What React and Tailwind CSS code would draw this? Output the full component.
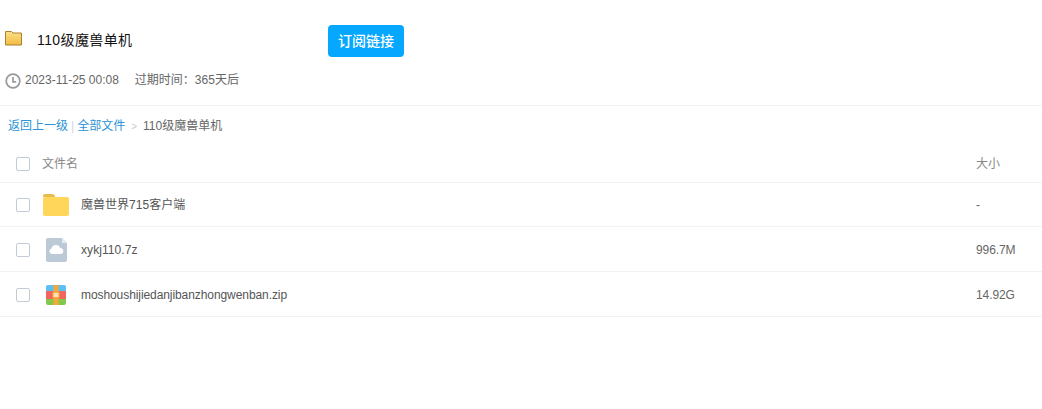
const FONT = "font-['Liberation_Sans','Noto_Sans_CJK_SC',sans-serif]";

const FILES = [
  { name: "魔兽世界715客户端", size: "-", icon: "folder", row: "h-[44px]", nameClass: "tracking-[0.02px]" },
  { name: "xykj110.7z", size: "996.7M", icon: "file", row: "h-[45px] pt-px", nameClass: "tracking-[0.08px]" },
  { name: "moshoushijiedanjibanzhongwenban.zip", size: "14.92G", icon: "zip", row: "h-[45px] pt-px", nameClass: "tracking-[-0.08px]" },
];

function SmallFolder() {
  return (
    <svg width="17" height="16" viewBox="0 0 17 16">
      <defs>
        <linearGradient id="sf" x1="0" y1="0" x2="0" y2="1">
          <stop offset="0" stopColor="#fbe08a" />
          <stop offset="1" stopColor="#f3bc42" />
        </linearGradient>
      </defs>
      <path d="M.5 1.5h6l1.500 1.500h8.500v12H.5z" fill="url(#sf)" stroke="#a9822f" />
    </svg>
  );
}

function Clock() {
  return (
    <svg className="mt-px" width="16" height="16" viewBox="0 0 16 16" fill="none" stroke="#999" strokeWidth="1.700">
      <circle cx="8" cy="8" r="6.800" />
      <path d="M8 4v4.800h3.200" />
    </svg>
  );
}

function FolderIcon() {
  return (
    <svg width="26" height="22" viewBox="0 0 26 22">
      <path d="M0 2a2 2 0 0 1 2-2h7a3 3 0 0 1 3 3H0z" fill="#e8bb4f" />
      <rect x="0" y="3" width="26" height="19" rx="2" fill="#ffd659" />
    </svg>
  );
}

function FileIcon() {
  return (
    <svg width="21" height="24" viewBox="0 0 21 24">
      <path d="M2 0h14l5 5v17a2 2 0 0 1-2 2H2a2 2 0 0 1-2-2V2a2 2 0 0 1 2-2z" fill="#bccad7" />
      <path d="M16 0l5 5h-5z" fill="#e4eaf0" />
      <path d="M6 16a2.800 2.800 0 0 1-.4-5.500 4.500 4.500 0 0 1 8.600-.6 3.100 3.100 0 0 1 .8 6.100z" fill="#fff" />
    </svg>
  );
}

function ZipIcon() {
  return (
    <svg width="20" height="20" viewBox="0 0 20 20">
      <path d="M2 0h16a2 2 0 0 1 2 2v4H0V2a2 2 0 0 1 2-2z" fill="#5cc0f2" />
      <rect x="0" y="6" width="20" height="8" fill="#f2655f" />
      <path d="M0 14h20v4a2 2 0 0 1-2 2H2a2 2 0 0 1-2-2z" fill="#84c84a" />
      <rect x="7.500" y="0" width="5" height="20" fill="#f5a93c" />
      <rect x="7" y="7.500" width="6" height="5" fill="#fbe3b5" stroke="#f5a93c" />
    </svg>
  );
}

const ICONS = { folder: FolderIcon, file: FileIcon, zip: ZipIcon };

function Check() {
  return <span className="block h-[14px] w-[14px] rounded-[2px] border border-[#c3cbd6] bg-white" />;
}

export default function App() {
  return (
    <div className={`${FONT} h-[409px] bg-white text-xs text-[#666]`}>
      <div className="flex h-[67px] items-start pl-[5px] pt-[25px]">
        <div className="mt-[5px] w-[32px]">
          <SmallFolder />
        </div>
        <div className="mt-[6px] w-[291px] text-sm leading-[18px] tracking-[0.4px] text-[#111]">110级魔兽单机</div>
        <div className="flex h-[32px] w-[76px] items-center justify-center rounded-[4px] bg-[#06a7ff] text-sm font-medium text-white">
          订阅链接
        </div>
      </div>
      <div className="flex h-[38px] items-start pl-[5px] pt-[5px]">
        <Clock />
        <span className="ml-[4px] leading-[16px]">2023-11-25 00:08</span>
        <span className="ml-[16px] leading-[16px]">过期时间：365天后</span>
      </div>
      <div className="border-t border-[#f2f3f5] pl-[8px] pt-[12px] leading-[16px]">
        <span className="text-[#2b93d6]">返回上一级</span>
        <span className="mx-[3px] text-[#c4d8e8]">|</span>
        <span className="text-[#2b93d6]">全部文件</span>
        <span className="mx-[6px] text-[10px] text-[#c4c9d0]">&gt;</span>
        <span>110级魔兽单机</span>
      </div>
      <div className="mt-[8px] flex h-[40px] items-center border-b border-[#f2f3f5] pl-[16px] pr-[27px] pt-[2px]">
        <Check />
        <span className="ml-[12px] flex-1 text-[#888]">文件名</span>
        <span className="w-[39px] text-[#888]">大小</span>
      </div>
      {FILES.map((f) => {
        const Icon = ICONS[f.icon];
        return (
          <div key={f.name} className={`${f.row} flex items-center border-b border-[#f2f3f5] pl-[16px]`}>
            <Check />
            <div className="ml-[12px] mr-[11px] flex w-[28px] justify-center">
              <Icon />
            </div>
            <span className={`${f.nameClass} flex-1 text-[#555]`}>{f.name}</span>
            <span className="w-[66px] tracking-[-0.1px] text-[#666]">{f.size}</span>
          </div>
        );
      })}
    </div>
  );
}
